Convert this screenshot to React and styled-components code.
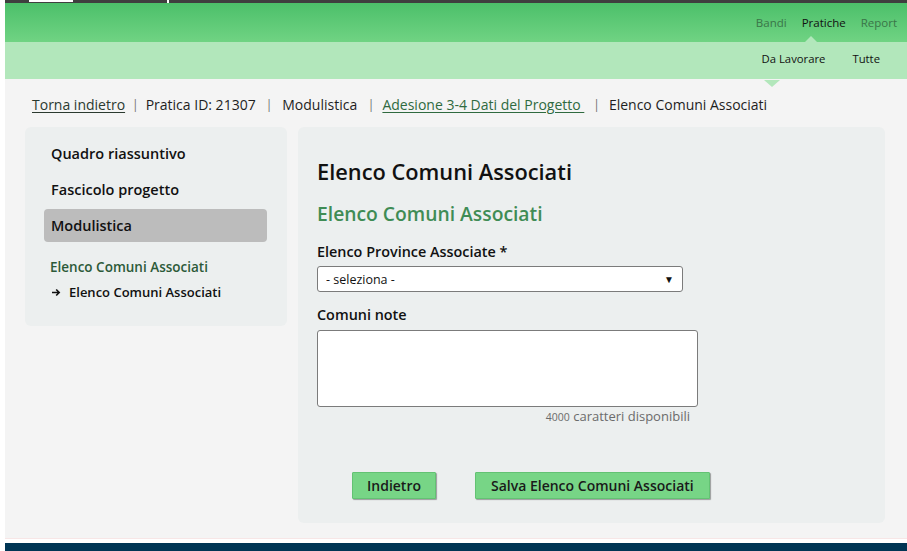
import React from "react";
import styled, { createGlobalStyle } from "styled-components";

const Global = createGlobalStyle`
  html, body { margin: 0; padding: 0; background: #ffffff; }
  body { font-family: "Open Sans", "Noto Sans", sans-serif; color: #1b1b1b; }
  * { box-sizing: border-box; }
`;

const Page = styled.div`
  margin-left: 5px;
  min-height: 551px;
  display: flex;
  flex-direction: column;
`;

const TopBar = styled.div`
  height: 3px;
  background: #3f3f3f;
  display: flex;
  align-items: flex-start;
  padding-left: 24px;
`;

const TopTab = styled.span`
  display: block;
  width: ${(p) => p.$w}px;
  height: ${(p) => p.$h}px;
  margin-right: ${(p) => p.$mr || 0}px;
  background: #ffffff;
`;

const MainNav = styled.nav`
  height: 39px;
  background: linear-gradient(#4cc06a, #70d383);
  display: flex;
  justify-content: flex-end;
  align-items: center;
  gap: 15px;
  padding-right: 10px;
`;

const NavItem = styled.span`
  position: relative;
  font-size: 11.5px;
  color: ${(p) => (p.$active ? "#111" : "#3a7548")};
  &::after {
    content: "";
    display: ${(p) => (p.$active ? "block" : "none")};
    position: absolute;
    left: 1px;
    top: 21px;
    border-left: 8px solid transparent;
    border-right: 8px solid transparent;
    border-bottom: 8px solid #b2e7bb;
  }
`;

const SubNav = styled.nav`
  height: 37px;
  background: #b2e7bb;
  display: flex;
  justify-content: flex-end;
  align-items: center;
  gap: 27px;
  padding: 0 27px 5px 0;
  position: relative;
  z-index: 1;
`;

const SubItem = styled.span`
  position: relative;
  font-size: 11.3px;
  color: #111;
  &::after {
    content: "";
    display: ${(p) => (p.$active ? "block" : "none")};
    position: absolute;
    left: 2px;
    top: 29px;
    border-left: 8px solid transparent;
    border-right: 8px solid transparent;
    border-top: 7px solid #b2e7bb;
  }
`;

const Content = styled.main`
  flex: 1;
  background: #f4f4f4;
  padding: 16px 22px 15px 20px;
`;

const Breadcrumb = styled.div`
  font-size: 14px;
  line-height: 20px;
  padding-left: 7px;
  margin-bottom: 12px;
  color: #1e1e1e;
  display: flex;
  align-items: center;
  white-space: pre;
`;

const Crumb = styled.a`
  color: ${(p) => (p.$green ? "#2f6a3f" : "#2b3a2f")};
  text-decoration: underline;
  text-underline-offset: 2px;
`;

const Sep = styled.span`
  color: #6e6e6e;
  font-size: 12px;
  margin-left: ${(p) => p.$l}px;
  margin-right: ${(p) => p.$r}px;
`;

const Columns = styled.div`
  display: flex;
  align-items: flex-start;
  gap: 11px;
`;

const Sidebar = styled.aside`
  width: 262px;
  background: #ecefef;
  border-radius: 6px;
  padding: 10px 20px 25px 19px;
`;

const SideItem = styled.div`
  height: 33px;
  line-height: 33px;
  padding: 0 7px;
  margin-bottom: 3px;
  font-size: 14.5px;
  font-weight: 600;
  color: #111;
  border-radius: 4px;
  background: ${(p) => (p.$active ? "#bcbcbc" : "transparent")};
`;

const SideGroup = styled.div`
  margin-top: 16px;
  padding-left: 6px;
  font-size: 13.5px;
  font-weight: 600;
  line-height: 18px;
  color: #2c5a39;
`;

const SideSub = styled.div`
  margin-top: 7px;
  padding-left: 8px;
  font-size: 13px;
  font-weight: 600;
  line-height: 18px;
  color: #111;
  display: flex;
  align-items: center;
  gap: 8px;
`;

const Panel = styled.section`
  flex: 1;
  background: #ecefef;
  border-radius: 6px;
  padding: 31px 19px 24px 19px;
`;

const Title = styled.h1`
  margin: 0;
  font-size: 21.8px;
  line-height: 28px;
  font-weight: 600;
  color: #111;
`;

const SubTitle = styled.h2`
  margin: 15px 0 0;
  font-size: 19.3px;
  line-height: 26px;
  font-weight: 600;
  color: #3f8c55;
`;

const Label = styled.label`
  display: block;
  margin-top: ${(p) => p.$mt}px;
  font-size: 14.4px;
  line-height: 20px;
  font-weight: 600;
  color: #111;
`;

const SelectWrap = styled.div`
  position: relative;
  width: 366px;
  margin-top: 4px;
`;

const Select = styled.select`
  appearance: none;
  -webkit-appearance: none;
  width: 100%;
  height: 26px;
  border: 1px solid #7b7b7b;
  border-radius: 3px;
  background: #fff;
  font-family: "Open Sans", sans-serif;
  font-size: 12.5px;
  color: #111;
  padding: 0 8px;
`;

const Arrow = styled.span`
  position: absolute;
  right: 9px;
  top: 7px;
  font-size: 10px;
  line-height: 12px;
  color: #111;
  pointer-events: none;
`;

const NoteBlock = styled.div`
  width: 381px;
  margin-top: 5px;
`;

const TextArea = styled.textarea`
  display: block;
  width: 100%;
  height: 77px;
  border: 1px solid #7b7b7b;
  border-radius: 3px;
  background: #fff;
  resize: none;
`;

const Counter = styled.div`
  text-align: right;
  padding-right: 8px;
  font-size: 13px;
  line-height: 18px;
  color: #6b6b6b;
`;

const CounterNum = styled.span`
  font-size: 10.5px;
`;

const Actions = styled.div`
  display: flex;
  gap: 39px;
  margin-top: 46px;
  padding-left: 35px;
`;

const Button = styled.button`
  height: 27px;
  padding: 0 ${(p) => p.$px}px;
  background: #77d586;
  border: 1px solid #63c273;
  border-radius: 1px;
  box-shadow: 1px 1px 1px rgba(0, 0, 0, 0.35);
  font-family: "Open Sans", sans-serif;
  font-size: 14px;
  font-weight: 600;
  color: #1a1a1a;
`;

const FooterLine = styled.div`
  height: 1px;
  background: #f7e6e6;
  margin-bottom: 4px;
`;

const Footer = styled.footer`
  height: 8px;
  background: #003554;
`;

export default function App() {
  return (
    <>
      <Global />
      <Page>
        <TopBar>
          <TopTab $w={44} $h={2} $mr={94} />
          <TopTab $w={2} $h={3} />
        </TopBar>
        <MainNav>
          <NavItem>Bandi</NavItem>
          <NavItem $active>Pratiche</NavItem>
          <NavItem>Report</NavItem>
        </MainNav>
        <SubNav>
          <SubItem $active>Da Lavorare</SubItem>
          <SubItem>Tutte</SubItem>
        </SubNav>
        <Content>
          <Breadcrumb>
            <Crumb href="#">Torna indietro</Crumb>
            <Sep $l={7} $r={7}>|</Sep>
            <span>Pratica ID: 21307</span>
            <Sep $l={10} $r={10}>|</Sep>
            <span>Modulistica </span>
            <Sep $l={7} $r={8}>|</Sep>
            <Crumb href="#" $green>Adesione 3-4 Dati del Progetto </Crumb>
            <Sep $l={9} $r={9}>|</Sep>
            <span>Elenco Comuni Associati</span>
          </Breadcrumb>
          <Columns>
            <Sidebar>
              <SideItem>Quadro riassuntivo</SideItem>
              <SideItem>Fascicolo progetto</SideItem>
              <SideItem $active>Modulistica</SideItem>
              <SideGroup>Elenco Comuni Associati</SideGroup>
              <SideSub>
                <svg width="9" height="9" viewBox="0 0 9 9">
                  <path d="M0 4.5h7M4.2 1.5l3 3-3 3" stroke="#111" strokeWidth="1.6" fill="none" />
                </svg>
                Elenco Comuni Associati
              </SideSub>
            </Sidebar>
            <Panel>
              <Title>Elenco Comuni Associati</Title>
              <SubTitle>Elenco Comuni Associati</SubTitle>
              <Label $mt={15}>Elenco Province Associate *</Label>
              <SelectWrap>
                <Select defaultValue="">
                  <option value="">- seleziona -</option>
                </Select>
                <Arrow>▼</Arrow>
              </SelectWrap>
              <Label $mt={13}>Comuni note</Label>
              <NoteBlock>
                <TextArea />
                <Counter>
                  <CounterNum>4000</CounterNum> caratteri disponibili
                </Counter>
              </NoteBlock>
              <Actions>
                <Button $px={14}>Indietro</Button>
                <Button $px={15}>Salva Elenco Comuni Associati</Button>
              </Actions>
            </Panel>
          </Columns>
        </Content>
        <FooterLine />
        <Footer />
      </Page>
    </>
  );
}
